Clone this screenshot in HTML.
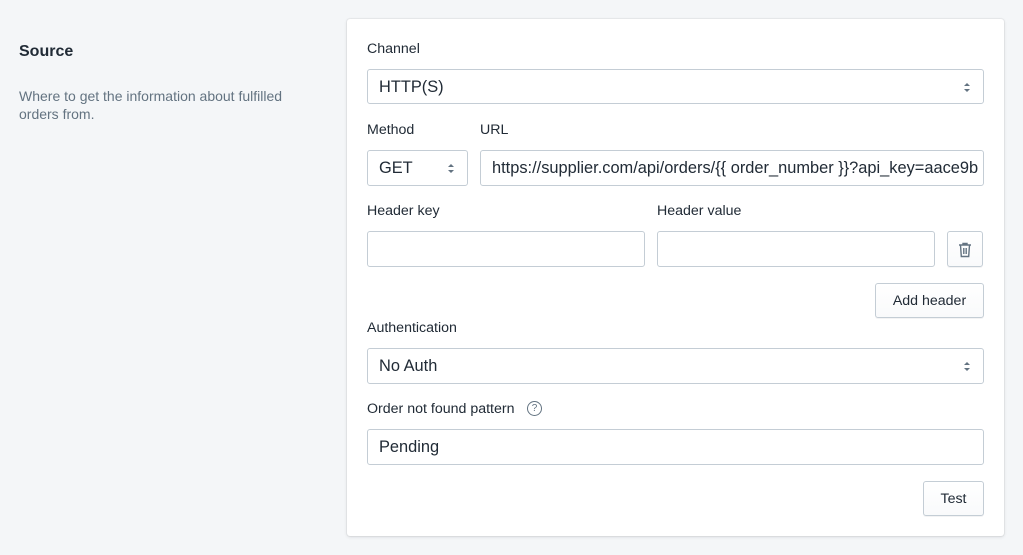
<!DOCTYPE html><html><head><style>
body{margin:0;width:1023px;height:555px;background:#f4f6f8;font-family:"Liberation Sans",sans-serif;position:relative;overflow:hidden;color:#212b36}
.a{position:absolute}
.lbl{font-size:14.2px;color:#212b36}
.in{position:absolute;box-sizing:border-box;border:1px solid #c4cdd5;border-radius:3px;background:#fff;font-size:16.4px;padding-left:11px;line-height:35px;white-space:nowrap;overflow:hidden}
.btn{position:absolute;box-sizing:border-box;border:1px solid #c4cdd5;border-radius:3px;background:linear-gradient(#fff,#f9fafb);font-size:14.2px;text-align:center;line-height:34px;box-shadow:0 1px 0 rgba(22,29,37,.05)}
.ar{position:absolute;right:16px;top:13px;width:0;height:0}
.ar:before{content:"";position:absolute;left:-3px;top:0;border:3px solid transparent;border-bottom:3px solid #637381;border-top:0}
.ar:after{content:"";position:absolute;left:-3px;top:6px;border:3px solid transparent;border-top:3px solid #637381;border-bottom:0}
</style></head><body>
<div class="a" style="left:19px;top:43px;font-size:16px;font-weight:bold">Source</div>
<div class="a" style="left:19px;top:87px;font-size:14px;color:#637381;line-height:18px;width:300px">Where to get the information about fulfilled orders from.</div>
<div class="a" style="left:347px;top:19px;width:657px;height:517px;background:#fff;border-radius:3px;box-shadow:0 0 0 1px rgba(63,63,68,.05),0 1px 3px rgba(63,63,68,.15)"></div>
<div class="a lbl" style="left:367px;top:41px">Channel</div>
<div class="in" style="left:367px;top:69px;width:617px;height:35px">HTTP(S)<div class="ar"></div></div>
<div class="a lbl" style="left:367px;top:122px">Method</div>
<div class="a lbl" style="left:480px;top:122px">URL</div>
<div class="in" style="left:367px;top:150px;width:101px;height:36px">GET<div class="ar"></div></div>
<div class="in" style="left:480px;top:150px;width:504px;height:36px">https://supplier.com/api/orders/{{ order_number }}?api_key=aace9b</div>
<div class="a lbl" style="left:367px;top:203px">Header key</div>
<div class="a lbl" style="left:657px;top:203px">Header value</div>
<div class="in" style="left:367px;top:231px;width:278px;height:36px"></div>
<div class="in" style="left:657px;top:231px;width:278px;height:36px"></div>
<div class="btn" style="left:947px;top:231px;width:36px;height:36px"><svg width="14" height="16" viewBox="0 0 14 16" style="margin-top:10px" fill="none" stroke="#637381" stroke-width="1.4"><path d="M1 3h12M5 3V1.5h4V3M2.5 3l.8 11.5h7.4L11.5 3M5.8 6v6M8.2 6v6"/></svg></div>
<div class="btn" style="left:875px;top:283px;width:109px;height:35px">Add header</div>
<div class="a lbl" style="left:367px;top:320px">Authentication</div>
<div class="in" style="left:367px;top:348px;width:617px;height:36px">No Auth<div class="ar"></div></div>
<div class="a lbl" style="left:367px;top:401px">Order not found pattern</div>
<div class="a" style="left:527px;top:401px;width:13px;height:13px;border:1px solid #637381;border-radius:50%;font-size:10px;text-align:center;line-height:13px;color:#637381">?</div>
<div class="in" style="left:367px;top:429px;width:617px;height:36px">Pending</div>
<div class="btn" style="left:923px;top:481px;width:61px;height:35px">Test</div>
</body></html>
